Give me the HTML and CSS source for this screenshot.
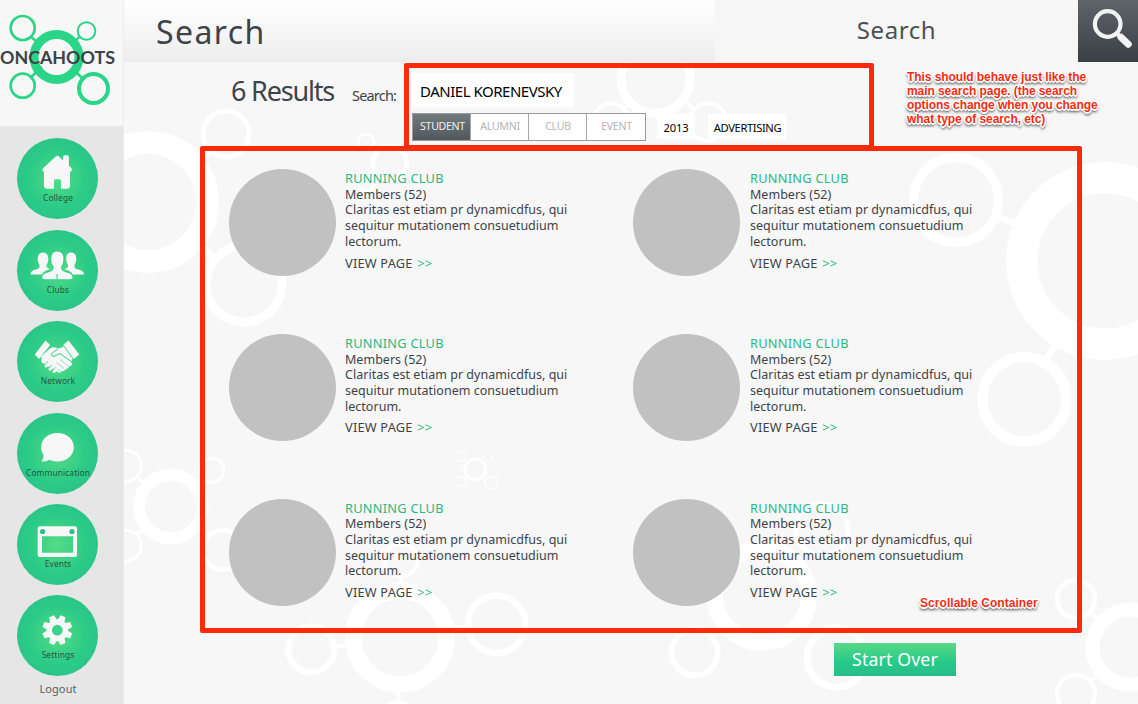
FILE: index.html
```html
<!DOCTYPE html>
<html lang="en">
<head>
<meta charset="utf-8">
<title>Oncahoots – Search</title>
<link rel="stylesheet" href="styles.css">
</head>
<body>
<div class="app">
  <svg class="backdrop" viewBox="0 0 1138 704" aria-hidden="true">
    <g fill="none" stroke="#fff">
      <circle cx="148" cy="202" r="59.5" stroke-width="23"/>
      <circle cx="226" cy="134" r="23" stroke-width="5"/>
      <circle cx="244" cy="284" r="38" stroke-width="9"/>
      <path d="M203 247l11 11M203 157l6-6" stroke-width="7"/>
      <circle cx="366" cy="142" r="8" stroke-width="2.5"/>
      <circle cx="390" cy="163" r="17" stroke-width="5"/>
      <circle cx="366" cy="183" r="8" stroke-width="2.5"/>
      <circle cx="655.5" cy="79" r="34.5" stroke-width="9"/>
      <circle cx="611" cy="121" r="17.5" stroke-width="4"/>
      <circle cx="708" cy="122" r="18.5" stroke-width="4"/>
      <path d="M624 109l7-7M688 104l7 6" stroke-width="4"/>
      <circle cx="170.8" cy="506.5" r="31.7" stroke-width="12"/>
      <circle cx="125.7" cy="466" r="15.5" stroke-width="3"/>
      <circle cx="212" cy="470" r="12" stroke-width="3"/>
      <circle cx="125.7" cy="545.7" r="15.5" stroke-width="3"/>
      <circle cx="222.7" cy="550" r="19.8" stroke-width="4.5"/>
      <path d="M137 477l7 6M137 534l7-6M197 484l6-6M197 529l10 9" stroke-width="3"/>
      <circle cx="475.3" cy="469.3" r="10.3" stroke-width="3"/>
      <circle cx="461" cy="456.7" r="5.2" stroke-width="1.3"/>
      <circle cx="488.3" cy="457.7" r="4" stroke-width="1.2"/>
      <circle cx="461" cy="481.3" r="5.2" stroke-width="1.3"/>
      <circle cx="491" cy="482.7" r="6.3" stroke-width="1.6"/>
      <circle cx="400" cy="637.7" r="46.7" stroke-width="16.5"/>
      <circle cx="311.3" cy="649.3" r="23" stroke-width="6"/>
      <circle cx="496.7" cy="624.3" r="28.7" stroke-width="6.5"/>
      <circle cx="401" cy="560" r="16.5" stroke-width="4"/>
      <circle cx="398" cy="719" r="16" stroke-width="5"/>
      <path d="M336 647l11-2M452 628l15-1M401 577v8M398.500 690v12" stroke-width="4"/>
      <circle cx="762" cy="595.500" r="47" stroke-width="16"/>
      <circle cx="694.7" cy="652.3" r="23" stroke-width="6"/>
      <circle cx="836.700" cy="657.7" r="29.500" stroke-width="7"/>
      <circle cx="822" cy="530" r="26" stroke-width="5"/>
      <circle cx="1130" cy="647" r="37.5" stroke-width="14"/>
      <circle cx="1076" cy="599" r="19" stroke-width="4.500"/>
      <circle cx="1076" cy="694" r="19" stroke-width="4.500"/>
      <path d="M1090 612l9 7M1090 681l9-7" stroke-width="4"/>
      <circle cx="1105" cy="261" r="83.2" stroke-width="31.5"/>
      <circle cx="956" cy="200" r="42.500" stroke-width="9"/>
      <circle cx="1024.3" cy="399.3" r="42" stroke-width="10.500"/>
      <path d="M998 217l18 7M1055 345l-9 15" stroke-width="7"/>
    </g>
  </svg>

  <aside class="sidebar">
    <div class="logo">
      <svg width="124" height="126" viewBox="0 0 124 126" role="img" aria-label="Oncahoots">
        <g fill="none" stroke="#2bd588">
          <path d="M30 36l12 10M80 36l-9 10M30 78l12-11M84 80l-12-12" stroke-width="2.500"/>
          <circle cx="56.500" cy="57" r="22.500" stroke-width="9"/>
          <circle cx="22.700" cy="28" r="12" stroke-width="2.700"/>
          <circle cx="86.500" cy="31" r="8.800" stroke-width="2"/>
          <circle cx="22.700" cy="85.700" r="12" stroke-width="2.700"/>
          <circle cx="93.500" cy="88.500" r="14.500" stroke-width="4"/>
        </g>
        <text class="logo-text" x="0" y="64.300" textLength="115" lengthAdjust="spacingAndGlyphs">ONCAHOOTS</text>
      </svg>
    </div>
    <nav class="nav">
      <a class="nav-item">
        <svg width="81" height="53" viewBox="0 0 81 53" fill="#f7f7f7"><path d="M39 18.300q1.300-1 2.600 0l4.400 4v-2.500q0-2.300 2-2.600h2.300q1.600 0 1.600 1.600v8.700l2.600 2.700q1 1 .3 2.300-.7 1.200-1.800 1.200v14q0 3-3 3h-6v-8q0-1.500-1.500-1.500h-4q-1.500 0-1.500 1.500v8h-6.500q-3.500 0-3.500-3.500v-13.500q-1.200-.300-1.500-1.300-.3-1.300.6-2.100z"/></svg>
        <span>College</span>
      </a>
      <a class="nav-item">
        <svg width="81" height="53" viewBox="0 0 81 53" fill="#f7f7f7">
          <path d="M26 22.500q5.500 0 5.300 7-.2 3.500-1.800 5.600v2q1 1.300 3.500 2.200-7 1.700-8 5.200H13.500q0-3.500 3.500-4.500 5-1 5.500-3v-2q-1.800-2.500-1.800-5.500-.2-7 5.300-7zM54 22.500q5.500 0 5.300 7 0 3-1.800 5.500v2q.5 2 5.500 3 4 1 4 4.500H55.500q-1-3.500-8-5.200 2.500-.9 3.500-2.200v-2q-1.800-2.500-1.800-5.600-.2-7 4.800-7z"/>
          <path d="M40 21.500q6.800 0 6.500 8-.2 4.500-2.300 7v2.500q.8 2.300 6.300 3.800 5 1.400 5 4.500 0 2-3 2H28.200q-3 0-3-2 0-3.100 5-4.500 5.500-1.500 6.300-3.800v-2.500q-2.100-2.500-2.300-7-.3-8 5.800-8z" stroke="#2bd088" stroke-width="1.800" paint-order="stroke"/><path d="M40 44v5.500" stroke="#2bd088"/>
        </svg>
        <span>Clubs</span>
      </a>
      <a class="nav-item">
        <svg width="81" height="53" viewBox="0 0 81 53">
          <path d="M28.500 19.500l4.700 4.500L22 38l-4.200-4.500zM51.500 19.500l10.800 14-5.500 4.500L46.300 23.800z" fill="#f7f7f7"/>
          <path d="M33.500 27q4-1.500 7 .3l4-.6 2-1.500 9 12.500-1.300 3.300q1.600 1.800.4 3.300-1.200 1.200-2.600.8.100 2.500-3.300 3-.5 2.500-4 2-1.300 2.600-4 1.200l-5-4-5.500-2-6-5.500.600-3.300L23.500 36z" fill="#f7f7f7"/>
          <path d="M41.500 27.500l-7 5q-1 3 2.500 2.800l6-2.800 11.500 8.300" fill="none" stroke="#2bd088" stroke-width="1"/>
          <path d="M43 38.500l8.500 6.500M39.500 41.500l7.500 6M37 45l6 5" fill="none" stroke="#2bd088" stroke-width=".5"/>
          <path d="M26 41l3.500-2.500M29 45l4-3.500M33 48.200l3.500-3.200M37 50.500l2.500-2.500" fill="none" stroke="#f7f7f7" stroke-width="3" stroke-linecap="round"/>
          <path d="M27.500 43.500l3.500-3M31.500 47l3.500-3M35.500 49.500l2.500-2.500" fill="none" stroke="#2bd088" stroke-width=".8"/>
        </svg>
        <span>Network</span>
      </a>
      <a class="nav-item">
        <svg width="81" height="53" viewBox="0 0 81 53" fill="#f7f7f7"><path d="M40.500 20c9 0 16.300 6 16.300 14.200s-7.300 14.300-16.300 14.300c-3 0-5.800-.6-8.200-1.800-2.500 1.600-5 2-7.800 1.800 1.200-2 2.200-4 2-6.500-1.500-2.300-2.300-5-2.300-7.800C24.200 26 31.500 20 40.500 20z"/></svg>
        <span>Communication</span>
      </a>
      <a class="nav-item">
        <svg width="81" height="53" viewBox="0 0 81 53"><path fill="#f7f7f7" fill-rule="evenodd" d="M22.700 22.300h35.300q2 0 2 2V51q0 2-2 2H22.700q-2 0-2-2V24.300q0-2 2-2zM25 32.200v16.500h31V32.200z"/><g fill="#28c088"><circle cx="25.600" cy="27.500" r="2.600"/><circle cx="55" cy="27.500" r="2.600"/></g></svg>
        <span>Events</span>
      </a>
      <a class="nav-item">
        <svg width="81" height="53" viewBox="0 0 81 53">
          <g transform="translate(40.300 35.200) rotate(22.500)">
            <g fill="#f7f7f7">
              <path id="teeth" d="M-3.600-10l1-5h5.200l1 5v20l-1 5h-5.200l-1-5z"/>
              <use href="#teeth" transform="rotate(45)"/><use href="#teeth" transform="rotate(90)"/><use href="#teeth" transform="rotate(135)"/>
              <circle r="10.800"/>
            </g>
            <circle r="5.400" fill="#3ad486"/>
          </g>
        </svg>
        <span>Settings</span>
      </a>
    </nav>
    <a class="logout">Logout</a>
  </aside>

  <main class="main">
    <header class="topbar">
      <h1 class="page-title"><span>Search</span></h1>
      <div class="top-search"><span>Search</span></div>
      <div class="search-button">
        <svg width="60" height="62" viewBox="0 0 60 62" fill="none" stroke="#f3f3f3"><circle cx="29.700" cy="24" r="12.800" stroke-width="4.200"/><path d="M39.500 34l2.500 2.500" stroke-width="4"/><path d="M43 37.200l7.300 7" stroke-width="7" stroke-linecap="round"/></svg>
      </div>
    </header>

    <section class="query">
      <h2 class="count"><span>6 Results</span></h2>
      <span class="query-label">Search:</span>
      <div class="filters">
        <div class="term"><span>DANIEL KORENEVSKY</span></div>
        <div class="options">
          <div class="tabs">
            <span class="tab active">STUDENT</span><span class="tab">ALUMNI</span><span class="tab">CLUB</span><span class="tab">EVENT</span>
          </div>
          <span class="chip year">2013</span>
          <span class="chip major">ADVERTISING</span>
        </div>
      </div>
      <p class="note">This should behave just like the<br>main search page. (the search<br>options change when you change<br>what type of search, etc)</p>
    </section>

    <section class="results">
      <article class="card"><div class="avatar"></div><div class="info"><h3>RUNNING CLUB</h3><p>Members (52)</p><p>Claritas est etiam pr dynamicdfus, qui</p><p>sequitur mutationem consuetudium</p><p>lectorum.</p><a class="view">VIEW PAGE <b>&gt;&gt;</b></a></div></article>
      <article class="card"><div class="avatar"></div><div class="info"><h3>RUNNING CLUB</h3><p>Members (52)</p><p>Claritas est etiam pr dynamicdfus, qui</p><p>sequitur mutationem consuetudium</p><p>lectorum.</p><a class="view">VIEW PAGE <b>&gt;&gt;</b></a></div></article>
      <article class="card"><div class="avatar"></div><div class="info"><h3>RUNNING CLUB</h3><p>Members (52)</p><p>Claritas est etiam pr dynamicdfus, qui</p><p>sequitur mutationem consuetudium</p><p>lectorum.</p><a class="view">VIEW PAGE <b>&gt;&gt;</b></a></div></article>
      <article class="card"><div class="avatar"></div><div class="info"><h3>RUNNING CLUB</h3><p>Members (52)</p><p>Claritas est etiam pr dynamicdfus, qui</p><p>sequitur mutationem consuetudium</p><p>lectorum.</p><a class="view">VIEW PAGE <b>&gt;&gt;</b></a></div></article>
      <article class="card"><div class="avatar"></div><div class="info"><h3>RUNNING CLUB</h3><p>Members (52)</p><p>Claritas est etiam pr dynamicdfus, qui</p><p>sequitur mutationem consuetudium</p><p>lectorum.</p><a class="view">VIEW PAGE <b>&gt;&gt;</b></a></div></article>
      <article class="card"><div class="avatar"></div><div class="info"><h3>RUNNING CLUB</h3><p>Members (52)</p><p>Claritas est etiam pr dynamicdfus, qui</p><p>sequitur mutationem consuetudium</p><p>lectorum.</p><a class="view">VIEW PAGE <b>&gt;&gt;</b></a></div></article>
      <p class="note scroll-note">Scrollable Container</p>
    </section>
    <button class="start-over">Start Over</button>
  </main>
</div>
</body>
</html>
```
FILE: styles.css
```css
* { box-sizing: border-box; margin: 0; padding: 0; }
body { font-family: "Noto Sans", sans-serif; color: #3d4347; background: #f7f7f7; overflow: hidden; }
.app { position: relative; display: flex; width: 1138px; height: 704px; overflow: hidden; }
.backdrop { position: absolute; inset: 0; width: 1138px; height: 704px; }

.sidebar { position: relative; width: 124px; background: #e6e6e6; border-right: 1px solid #ececec; display: flex; flex-direction: column; }
.logo { height: 126px; background: #f7f7f7; }
.logo svg { display: block; }
.logo-text { font: 700 16.5px Lato, sans-serif; fill: #3a4347; }
.nav { display: flex; flex-direction: column; gap: 10.4px; padding: 12.4px 0 0 17px; }
.nav-item { width: 81px; height: 81px; border-radius: 50%; display: flex; flex-direction: column; align-items: center; background: radial-gradient(circle, #56dc85 0, #2ccb88 50%, #27be89 100%); }
.nav-item svg { display: block; flex: none; }
.nav-item span { padding: 1px 0 0 1px; font-size: 8.4px; line-height: 12px; letter-spacing: .1px; color: #245545; white-space: nowrap; }
.logout { padding: 5px 0 0 17px; width: 99px; text-align: center; font-size: 11px; line-height: 16px; color: #5b6063; letter-spacing: .1px; }

.main { position: relative; flex: 1; display: flex; flex-direction: column; }
.topbar { display: flex; height: 62px; }
.page-title { width: 591px; padding-left: 32px; font-size: 32px; font-weight: 400; line-height: 64px; letter-spacing: 1.4px; background: linear-gradient(#fff, #ededed); }
.top-search { width: 363px; font-size: 24px; line-height: 59px; text-align: center; letter-spacing: .6px; background: #f6f6f6; color: #4b5154; }
.search-button { width: 60px; background: linear-gradient(#5e6469, #393f44); }
.search-button svg { display: block; }

.query { display: flex; height: 84px; padding-left: 107px; }
.count { width: 121px; font-size: 27px; font-weight: 400; line-height: 58px; letter-spacing: -1.2px; white-space: nowrap; }
.query-label { width: 52px; font-size: 14.5px; line-height: 67px; letter-spacing: -.8px; white-space: nowrap; }
.filters { width: 470px; height: 87px; margin-top: 1px; border: 5px solid #fb2a08; border-radius: 2px; padding: 5px 3px; flex: none; }
.term { width: 162px; height: 34px; padding-left: 8px; background: #fff; color: #000; font-size: 15px; line-height: 36px; letter-spacing: -.48px; white-space: nowrap; }
.options { display: flex; padding-top: 6px; }
.tabs { display: grid; grid-template-columns: repeat(4, 58px); width: 234px; height: 28px; border: 1px solid #9a9a9a; background: #fff; }
.tab { padding-left: 1px; text-align: center; font-size: 10.600px; line-height: 25px; color: #b5b5b5; letter-spacing: -.3px; border-right: 1px solid #aaa; }
.tab:last-child { border: 0; }
.tab.active { padding-left: 2px; background: linear-gradient(#737a7e, #51585c); color: #f1f1f1; }
.chip { height: 25px; margin-top: 1px; background: #fff; color: #000; font-size: 11.200px; line-height: 27px; text-align: center; letter-spacing: -.2px; }
.year { width: 38px; margin-left: 11px; }
.major { width: 78px; margin-left: 13px; padding-left: 1px; letter-spacing: -.4px; }
.note { margin: 8px 0 0 33px; font: 700 12px/14px "Liberation Sans", sans-serif; color: #f42c12; letter-spacing: -.07px; white-space: nowrap; text-shadow: -1.500px 0 #fff, 1.500px 0 #fff, 0 1.500px #fff, 0 -1.500px #fff, 1px 1px #fff, -1px -1px #fff, 1px -1px #fff, -1px 1px #fff, 0 2px 3px #333, 0 3px 3px #555; }

.results { position: relative; width: 882px; height: 487px; margin-left: 76px; border: 5px solid #fb2a08; border-radius: 2px; padding: 18px 0 0 24px; display: grid; grid-template-columns: 404px 404px; grid-template-rows: repeat(3, 164.800px); }
.card { display: flex; height: 108px; }
.avatar { width: 107px; height: 107px; border-radius: 50%; background: #c1c1c1; flex: none; }
.info { margin-left: 9px; padding-top: 2px; font-size: 12.500px; line-height: 15.700px; white-space: nowrap; }
.card:nth-child(even) .info { margin-left: 10px; }
.info p { letter-spacing: .02px; }
.info h3 { font-size: 12.800px; font-weight: 400; letter-spacing: .24px; color: #2bb883; }
.view { display: block; margin-top: 6px; font-size: 12.800px; letter-spacing: .2px; }
.view b { margin-left: 1px; font-weight: 400; font-size: 13px; color: #2bb883; }
.scroll-note { position: absolute; left: 715px; top: 445px; margin: 0; letter-spacing: .05px; }
.start-over { width: 122px; height: 33px; margin: 10px 0 0 710px; padding-bottom: 2px; border: 0; font: 17.800px "Noto Sans", sans-serif; letter-spacing: .1px; color: #fff; background: linear-gradient(#58d985, #27cb89 55%, #27bd89); }
```
